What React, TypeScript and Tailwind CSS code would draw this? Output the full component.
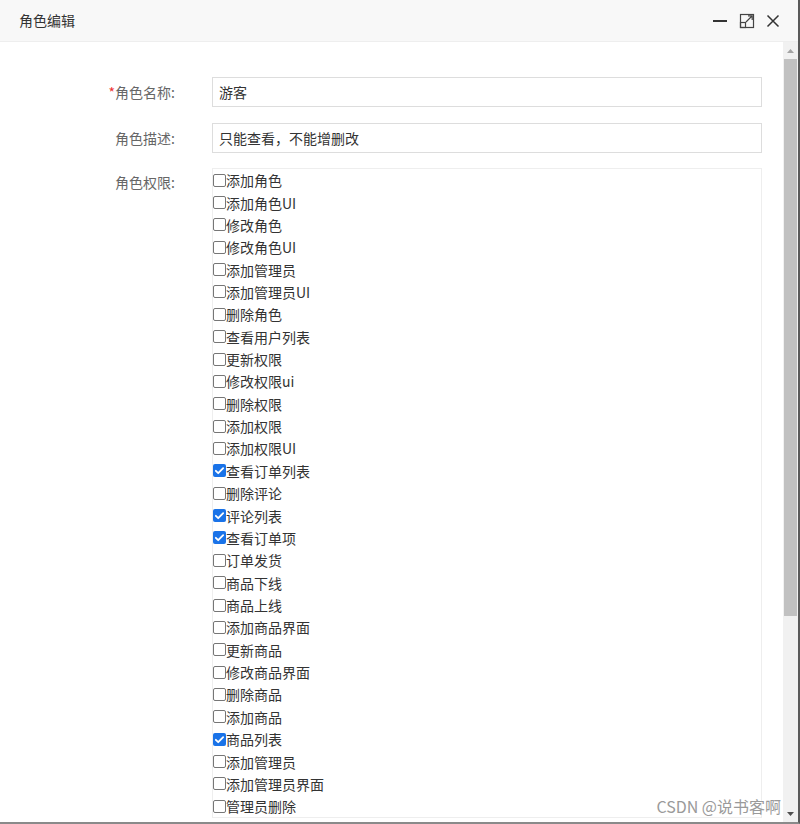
const perms: [string, boolean][] = [
  ["添加角色", false],
  ["添加角色UI", false],
  ["修改角色", false],
  ["修改角色UI", false],
  ["添加管理员", false],
  ["添加管理员UI", false],
  ["删除角色", false],
  ["查看用户列表", false],
  ["更新权限", false],
  ["修改权限ui", false],
  ["删除权限", false],
  ["添加权限", false],
  ["添加权限UI", false],
  ["查看订单列表", true],
  ["删除评论", false],
  ["评论列表", true],
  ["查看订单项", true],
  ["订单发货", false],
  ["商品下线", false],
  ["商品上线", false],
  ["添加商品界面", false],
  ["更新商品", false],
  ["修改商品界面", false],
  ["删除商品", false],
  ["添加商品", false],
  ["商品列表", true],
  ["添加管理员", false],
  ["添加管理员界面", false],
  ["管理员删除", false],
];

function Check({ on }: { on: boolean }) {
  if (on) {
    return (
      <span className="w-[13px] h-[13px] rounded-[2px] bg-[#1a73e8] flex items-center justify-center shrink-0">
        <svg width="11" height="11" viewBox="0 0 12 12" fill="none">
          <path d="M2 6.3l2.6 2.6L10 3.4" stroke="white" strokeWidth="2" strokeLinecap="round" strokeLinejoin="round" />
        </svg>
      </span>
    );
  }
  return <span className="w-[13px] h-[13px] rounded-[2px] border border-[#767676] bg-white shrink-0" />;
}

export default function App() {
  return (
    <div
      className="w-[800px] h-[824px] flex flex-col bg-white overflow-hidden border-r-2 border-r-[#5a5a5a] border-b-2 border-b-[#8a8a8a] text-[14px]"
      style={{ fontFamily: '"Microsoft YaHei", "Noto Sans CJK SC", sans-serif' }}
    >
      {/* title bar */}
      <div className="h-[42px] shrink-0 bg-[#f8f8f8] border-b border-[#eee] flex items-center pl-[19px] pr-[18px]">
        <span className="text-[#333] flex-1">角色编辑</span>
        <div className="flex items-center gap-[11px] text-[#333]">
          <svg width="16" height="16" viewBox="0 0 16 16">
            <rect x="1" y="7" width="14" height="2" fill="#333" />
          </svg>
          <svg width="16" height="16" viewBox="0 0 16 16" fill="none" stroke="#444" strokeWidth="1.2">
            <rect x="1.5" y="1.5" width="13" height="13" />
            <rect x="1.5" y="9.5" width="5" height="5" />
            <path d="M7 9l6-6M9 2.8h4.2V7" />
          </svg>
          <svg width="14" height="14" viewBox="0 0 14 14" stroke="#333" strokeWidth="1.5">
            <path d="M1.5 1.5l11 11M12.5 1.5l-11 11" />
          </svg>
        </div>
      </div>

      <div className="flex-1 flex min-h-0">
        {/* content */}
        <div className="flex-1 overflow-hidden pt-[35px] relative">
          <div className="flex items-center h-[30px]">
            <div className="w-[180px] pr-[5px] text-right text-[#666]">
              <span className="text-[#e33]">*</span>角色名称:
            </div>
            <div className="ml-[32px] w-[550px] h-[30px] border border-[#ddd] px-[6px] flex items-center text-[#333]">游客</div>
          </div>
          <div className="flex items-center h-[30px] mt-[16px]">
            <div className="w-[180px] pr-[5px] text-right text-[#666]">角色描述:</div>
            <div className="ml-[32px] w-[550px] h-[30px] border border-[#ddd] px-[6px] flex items-center text-[#333]">只能查看，不能增删改</div>
          </div>
          <div className="flex mt-[16px]">
            <div className="w-[180px] pr-[5px] text-right text-[#666] pt-[3px]">角色权限:</div>
            <div className="ml-[32px] w-[550px] border border-[#eee] -mt-[1px]">
              {perms.map(([name, on], i) => (
                <div key={i} className="h-[22.36px] flex items-center text-[#333]">
                  <Check on={on} />
                  <span className="leading-none">{name}</span>
                </div>
              ))}
            </div>
          </div>
          <div className="absolute right-[2px] bottom-[4px] text-[16px] text-[#9a9a9a]" style={{ textShadow: "0 0 2px #fff" }}>
            CSDN @说书客啊
          </div>
        </div>

        {/* scrollbar */}
        <div className="w-[15px] shrink-0 bg-[#f1f1f1] flex flex-col items-center">
          <div className="h-[17px] flex items-center justify-center">
            <svg width="7" height="4" viewBox="0 0 7 4"><path d="M3.5 0L7 4H0z" fill="#a3a3a3" /></svg>
          </div>
          <div className="w-[13px] h-[557px] bg-[#c1c1c1]" />
          <div className="flex-1" />
          <div className="h-[17px] flex items-center justify-center">
            <svg width="7" height="4" viewBox="0 0 7 4"><path d="M0 0H7L3.5 4z" fill="#505050" /></svg>
          </div>
        </div>
      </div>
    </div>
  );
}
